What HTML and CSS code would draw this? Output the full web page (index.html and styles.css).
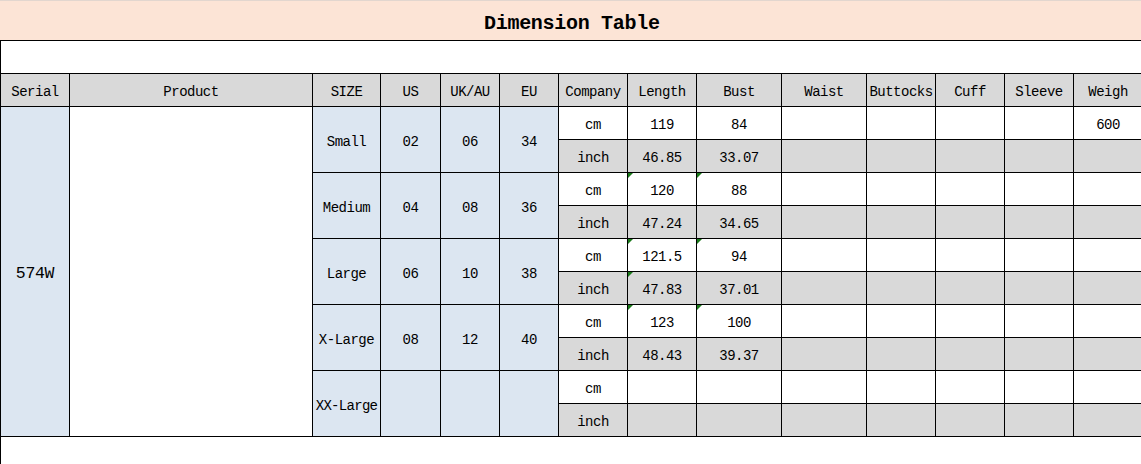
FILE: index.html
```html
<!DOCTYPE html>
<html>
<head>
<meta charset="utf-8">
<link rel="stylesheet" href="styles.css">
</head>
<body>
<div class="sheet">
<table class="dim">
  <colgroup>
    <col class="w69"><col class="w243"><col class="w68"><col class="w60"><col class="w59"><col class="w59">
    <col class="w69"><col class="w69"><col class="w85"><col class="w85"><col class="w69"><col class="w69"><col class="w69"><col class="w69">
  </colgroup>
  <tr class="title-row"><td colspan="14" class="title">Dimension Table</td></tr>
  <tr class="gap-row"><td colspan="14" class="gap"></td></tr>
  <tr class="row head">
    <td>Serial</td><td>Product</td><td>SIZE</td><td>US</td><td>UK/AU</td><td>EU</td><td>Company</td><td>Length</td><td>Bust</td><td>Waist</td><td>Buttocks</td><td>Cuff</td><td>Sleeve</td><td>Weigh</td>
  </tr>
  <tr class="row cm">
    <td rowspan="10" class="blue serial">574W</td>
    <td rowspan="10" class="white"></td>
    <td rowspan="2" class="blue">Small</td><td rowspan="2" class="blue">02</td><td rowspan="2" class="blue">06</td><td rowspan="2" class="blue">34</td>
    <td>cm</td><td>119</td><td>84</td><td></td><td></td><td></td><td></td><td>600</td>
  </tr>
  <tr class="row inch"><td>inch</td><td>46.85</td><td>33.07</td><td></td><td></td><td></td><td></td><td></td></tr>
  <tr class="row cm">
    <td rowspan="2" class="blue">Medium</td><td rowspan="2" class="blue">04</td><td rowspan="2" class="blue">08</td><td rowspan="2" class="blue">36</td>
    <td>cm</td><td class="flag">120</td><td class="flag">88</td><td></td><td></td><td></td><td></td><td></td>
  </tr>
  <tr class="row inch"><td>inch</td><td>47.24</td><td>34.65</td><td></td><td></td><td></td><td></td><td></td></tr>
  <tr class="row cm">
    <td rowspan="2" class="blue">Large</td><td rowspan="2" class="blue">06</td><td rowspan="2" class="blue">10</td><td rowspan="2" class="blue">38</td>
    <td>cm</td><td class="flag">121.5</td><td class="flag">94</td><td></td><td></td><td></td><td></td><td></td>
  </tr>
  <tr class="row inch"><td>inch</td><td class="flag">47.83</td><td>37.01</td><td></td><td></td><td></td><td></td><td></td></tr>
  <tr class="row cm">
    <td rowspan="2" class="blue">X-Large</td><td rowspan="2" class="blue">08</td><td rowspan="2" class="blue">12</td><td rowspan="2" class="blue">40</td>
    <td>cm</td><td class="flag">123</td><td class="flag">100</td><td></td><td></td><td></td><td></td><td></td>
  </tr>
  <tr class="row inch"><td>inch</td><td>48.43</td><td>39.37</td><td></td><td></td><td></td><td></td><td></td></tr>
  <tr class="row cm">
    <td rowspan="2" class="blue tight">XX-Large</td><td rowspan="2" class="blue"></td><td rowspan="2" class="blue"></td><td rowspan="2" class="blue"></td>
    <td>cm</td><td></td><td></td><td></td><td></td><td></td><td></td><td></td>
  </tr>
  <tr class="row inch"><td>inch</td><td></td><td></td><td></td><td></td><td></td><td></td><td></td></tr>
  <tr class="tail-row"><td colspan="14" class="tail"></td></tr>
</table>
</div>
</body>
</html>
```

FILE: styles.css
```css
html, body {
  margin: 0;
  padding: 0;
  background: #ffffff;
  overflow: hidden;
}

.sheet {
  width: 1141px;
  height: 464px;
  overflow: hidden;
}

.dim {
  border-collapse: collapse;
  table-layout: fixed;
  width: 1142px;
  font-family: "Liberation Mono", "DejaVu Sans Mono", monospace;
  font-size: 14px;
  letter-spacing: -0.5px;
  color: #000;
}

.w69 { width: 69px; }
.w243 { width: 243px; }
.w68 { width: 68px; }
.w60 { width: 60px; }
.w59 { width: 59px; }
.w85 { width: 85px; }

.dim td {
  border: 1px solid #000;
  padding: 4px 0 0 0;
  text-align: center;
  vertical-align: middle;
  white-space: nowrap;
  overflow: hidden;
}

.title-row { height: 40px; }
.dim td.title {
  background: #fce4d6;
  border-top: 1px solid #e2d6cf;
  border-left: 1px solid #fce4d6;
  border-right: none;
  font-size: 20px;
  font-weight: bold;
  letter-spacing: -0.3px;
  padding-top: 5px;
}

.gap-row { height: 33px; }
.dim td.gap {
  background: #fff;
  border-right: none;
}

.row { height: 33px; }
.row td { height: 32px; box-sizing: border-box; }

.head td { background: #d9d9d9; }
.cm td { background: #ffffff; }
.inch td { background: #d9d9d9; }

.dim td.blue { background: #dce6f1; }
.dim td.white { background: #ffffff; }

.dim td.serial { font-size: 16.5px; letter-spacing: -0.3px; }
.dim td.tight { letter-spacing: -0.7px; }

.flag { position: relative; }
.flag::before {
  content: "";
  position: absolute;
  left: 0;
  top: 0;
  border-top: 5px solid #1a7a1a;
  border-right: 5px solid transparent;
}

.tail-row { height: 40px; }
.dim td.tail {
  border-bottom: none;
  border-right: none;
  background: #fff;
}
```
